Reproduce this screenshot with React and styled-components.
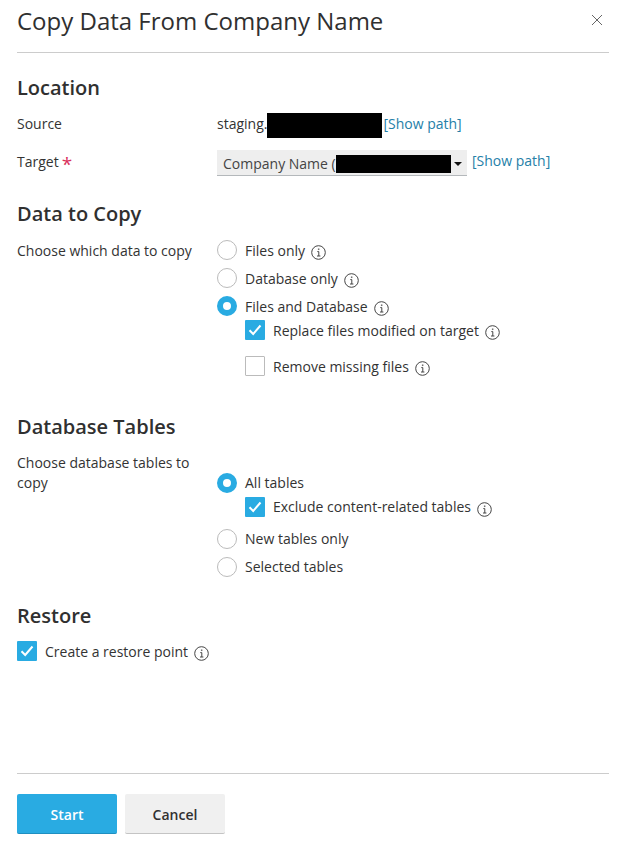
import React from 'react'
import styled, { createGlobalStyle } from 'styled-components'

const Global = createGlobalStyle`
html, body { margin: 0; padding: 0; background: #fff; }
body { font-family: "Open Sans", "Liberation Sans", sans-serif; color: #333; font-size: 14px; }
`

const Dialog = styled.div`
width: 623px;
height: 845px;
box-sizing: border-box;
padding: 0 14px 0 17px;
display: flex;
flex-direction: column;
`
const Header = styled.div`
height: 53px;
box-sizing: border-box;
border-bottom: 1px solid #ccc;
display: flex;
justify-content: space-between;
`
const Title = styled.h1`
margin: 0;
font-size: 24px;
font-weight: 400;
line-height: 42px;
color: #303030;
`
const Close = styled.button`
border: 0;
background: none;
padding: 0;
margin: 14px 6px 0 0;
width: 12px;
height: 12px;
display: block;
color: #666;
`
const Body = styled.div`
flex: 1;
display: flex;
flex-direction: column;
`
const SectionTitle = styled.h2`
margin: ${p => p.$top}px 0 0;
font-size: 20px;
font-weight: 600;
line-height: 28px;
height: 28px;
color: #303030;
`
const Row = styled.div`
display: flex;
margin-top: ${p => p.$top}px;
`
const Label = styled.div`
width: 200px;
line-height: 20px;
flex-shrink: 0;
padding-top: ${p => p.$shift || 0}px;
`
const Required = styled.span`
color: #d9305c;
margin-left: 3px;
font-size: 19px;
line-height: 1;
position: relative;
top: 4px;
`
const Value = styled.div`
display: flex;
align-items: flex-start;
height: 24px;
line-height: 20px;
`
const Redacted = styled.span`
display: inline-block;
width: ${p => p.$w}px;
height: ${p => p.$h}px;
margin-top: ${p => p.$top || 0}px;
background: #000;
`
const PathLink = styled.a`
color: #2580a8;
margin-left: ${p => p.$left}px;
`
const Select = styled.div`
width: 250px;
height: 26px;
box-sizing: border-box;
margin-top: -1px;
background: #eee;
border-bottom: 1px solid #b4b8bb;
display: flex;
align-items: center;
padding: 2px 0 0 6px;
line-height: 20px;
color: #444;
`
const Caret = styled.span`
width: 0;
height: 0;
margin-left: 3px;
border-left: 4px solid transparent;
border-right: 4px solid transparent;
border-top: 4px solid #111;
`
const Options = styled.div`
display: flex;
flex-direction: column;
`
const Option = styled.label`
display: flex;
align-items: center;
height: 20px;
margin-top: ${p => p.$top || 0}px;
margin-left: ${p => p.$indent || 0}px;
line-height: 20px;
`
const OptionText = styled.span`
padding-top: ${p => p.$shift ? 2 : 0}px;
`
const Radio = styled.span`
width: 20px;
height: 20px;
box-sizing: border-box;
border-radius: 50%;
margin-right: 8px;
flex-shrink: 0;
border: ${p => p.$on ? '6px solid #29abe2' : '1px solid #bbb'};
background: #fff;
`
const Box = styled.span`
width: 20px;
height: 20px;
box-sizing: border-box;
border-radius: 1px;
margin-right: 8px;
flex-shrink: 0;
display: flex;
align-items: center;
justify-content: center;
background: ${p => p.$on ? '#29abe2' : '#fff'};
border: ${p => p.$on ? '0' : '1px solid #bbb'};
`
const InfoIcon = styled.svg`
width: 15px;
height: 15px;
margin-left: 6px;
margin-top: 4px;
flex-shrink: 0;
`
const Footer = styled.div`
height: 72px;
box-sizing: border-box;
border-top: 1px solid #ccc;
padding-top: 20px;
display: flex;
gap: 8px;
`
const Button = styled.button`
width: 100px;
height: 40px;
border: 0;
border-radius: 2px;
padding: 2px 0 0;
font-family: inherit;
font-size: 14px;
font-weight: 600;
background: ${p => p.$primary ? '#29abe2' : '#f0f0f0'};
color: ${p => p.$primary ? '#fff' : '#303030'};
border-bottom: 1px solid ${p => p.$primary ? '#1f8fc0' : '#c4c4c4'};
`

const Info = () => (
  <InfoIcon viewBox="0 0 15 15" fill="none" stroke="#444">
    <circle cx="7.5" cy="7.5" r="6.8" strokeWidth="1" />
    <path d="M6.3 6.6H7.8V11M6 11H9.4" strokeWidth="1" />
    <path d="M7.2 3.7H8.2V4.7H7.2Z" fill="#444" strokeWidth="0.3" />
  </InfoIcon>
)

const Check = () => (
  <svg width="14" height="12" viewBox="0 0 14 12" fill="none">
    <path d="M1.5 6.2L5.2 10L12.5 1.5" stroke="#fff" strokeWidth="2" />
  </svg>
)

const RadioOption = ({ on, top, info, shift, children }) => (
  <Option $top={top}>
    <Radio $on={on} />
    <OptionText $shift={shift}>{children}</OptionText>
    {info && <Info />}
  </Option>
)

const CheckOption = ({ on, top, indent, shift, children }) => (
  <Option $top={top} $indent={indent}>
    <Box $on={on}>{on && <Check />}</Box>
    <OptionText $shift={shift}>{children}</OptionText>
    <Info />
  </Option>
)

const App = () => {
  return (
    <>
      <Global />
      <Dialog>
        <Header>
          <Title>Copy Data From Company Name</Title>
          <Close aria-label="Close">
            <svg width="12" height="12" viewBox="0 0 12 12" stroke="#666" strokeWidth="1">
              <path d="M1 1L11 11M11 1L1 11" />
            </svg>
          </Close>
        </Header>
        <Body>
          <SectionTitle $top={21}>Location</SectionTitle>
          <Row $top={12}>
            <Label>Source</Label>
            <Value>
              staging.<Redacted $w={115} $h={25} $top={-1} />
              <PathLink $left={1}>[Show path]</PathLink>
            </Value>
          </Row>
          <Row $top={13}>
            <Label>Target<Required>*</Required></Label>
            <Value>
              <Select>
                Company Name (<Redacted $w={115} $h={18} $top={1} />
                <Caret />
              </Select>
              <PathLink $left={5}>[Show path]</PathLink>
            </Value>
          </Row>
          <SectionTitle $top={25}>Data to Copy</SectionTitle>
          <Row $top={12}>
            <Label $shift={1}>Choose which data to copy</Label>
            <Options>
              <RadioOption info shift>Files only</RadioOption>
              <RadioOption info shift top={8}>Database only</RadioOption>
              <RadioOption info shift on top={8}>Files and Database</RadioOption>
              <CheckOption on shift top={4} indent={28}>Replace files modified on target</CheckOption>
              <CheckOption shift top={16} indent={28}>Remove missing files</CheckOption>
            </Options>
          </Row>
          <SectionTitle $top={37}>Database Tables</SectionTitle>
          <Row $top={12}>
            <Label>Choose database tables to copy</Label>
            <Options>
              <RadioOption on top={20}>All tables</RadioOption>
              <CheckOption on top={4} indent={28}>Exclude content-related tables</CheckOption>
              <RadioOption top={12}>New tables only</RadioOption>
              <RadioOption top={8}>Selected tables</RadioOption>
            </Options>
          </Row>
          <SectionTitle $top={25}>Restore</SectionTitle>
          <Options>
            <CheckOption on shift top={11}>Create a restore point</CheckOption>
          </Options>
        </Body>
        <Footer>
          <Button $primary>Start</Button>
          <Button>Cancel</Button>
        </Footer>
      </Dialog>
    </>
  )
}

export default App
